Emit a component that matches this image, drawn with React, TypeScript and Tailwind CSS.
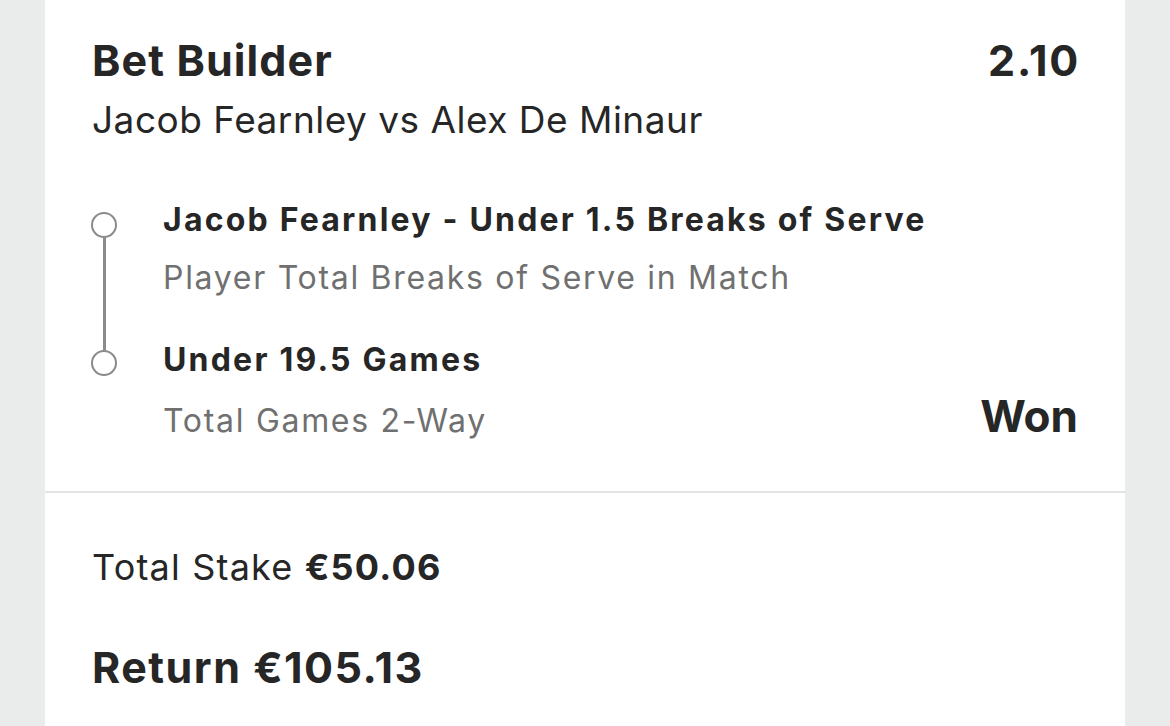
import React from "react";

export default function App() {
  return (
    <div
      className="w-[1170px] h-[726px] bg-[#eaeceb] flex justify-center overflow-hidden"
      style={{ fontFamily: "Inter, 'Noto Sans', sans-serif" }}
    >
      <div className="w-[1080px] bg-white flex flex-col text-[#262626]">
        <div className="px-[47px] pt-[34px] pb-[48px] border-b-2 border-[#e3e3e3]">
          <div className="flex justify-between items-start">
            <div className="text-[43px] leading-[52px] font-bold tracking-[1.1px]">Bet Builder</div>
            <div className="text-[43px] leading-[52px] font-bold tracking-[1.7px] -mr-[2px]">2.10</div>
          </div>
          <div className="text-[37px] leading-[47px] tracking-[0.5px] mt-[10px]">
            Jacob Fearnley vs Alex De Minaur
          </div>
          <div className="flex mt-[55px]">
            <div className="w-[26px] -ml-[1px] mr-[46px] flex flex-col items-center pt-[14px]">
              <div className="w-[26px] h-[26px] rounded-full border-[2.5px] border-[#8a8a8a]" />
              <div className="w-[3px] h-[112px] bg-[#8a8a8a]" />
              <div className="w-[26px] h-[26px] rounded-full border-[2.5px] border-[#8a8a8a]" />
            </div>
            <div className="flex-1 flex flex-col">
              <div className="text-[32px] leading-[44px] font-bold tracking-[2.2px]">
                Jacob Fearnley - Under 1.5 Breaks of Serve
              </div>
              <div className="text-[32px] leading-[44px] text-[#707070] tracking-[1.7px] mt-[14px]">
                Player Total Breaks of Serve in Match
              </div>
              <div className="text-[32px] leading-[44px] font-bold tracking-[2.2px] mt-[38px]">
                Under 19.5 Games
              </div>
              <div className="flex justify-between items-baseline mt-[16px]">
                <div className="text-[32px] leading-[44px] text-[#707070] tracking-[1.7px]">
                  Total Games 2-Way
                </div>
                <div className="text-[44px] leading-[36px] font-bold">Won</div>
              </div>
            </div>
          </div>
        </div>
        <div className="px-[47px] pt-[51px]">
          <div className="text-[36px] leading-[46px] tracking-[1.2px]">
            Total Stake <span className="font-bold">€50.06</span>
          </div>
          <div className="text-[43px] leading-[52px] font-bold tracking-[1.5px] mt-[51px]">
            Return €105.13
          </div>
        </div>
      </div>
    </div>
  );
}
